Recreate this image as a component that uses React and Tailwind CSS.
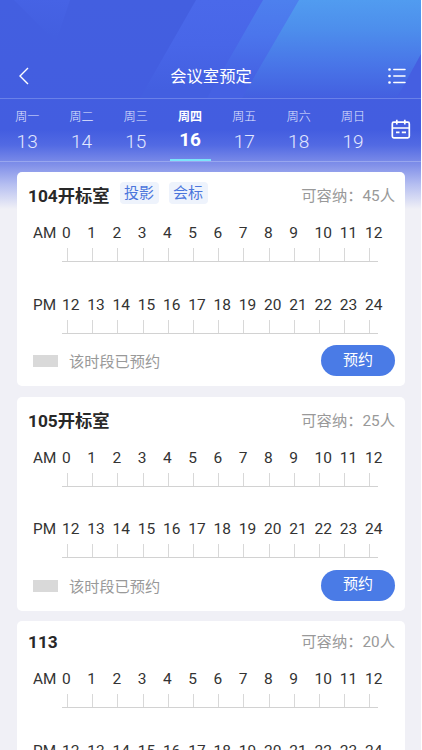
const days = [
  ['周一', 13], ['周二', 14], ['周三', 15], ['周四', 16],
  ['周五', 17], ['周六', 18], ['周日', 19],
];

const rooms = [
  { name: '104开标室', tags: ['投影', '会标'], seats: 45 },
  { name: '105开标室', tags: [], seats: 25 },
  { name: '113', tags: [], seats: 20, compact: true },
];

function Backdrop() {
  return (
    <svg className="absolute left-0 top-0 h-[220px] w-[421px]" viewBox="0 0 421 220" preserveAspectRatio="none" aria-hidden="true">
      <defs>
        <linearGradient id="sky" x1="0" y1="0" x2="0" y2="98" gradientUnits="userSpaceOnUse">
          <stop offset="0" stopColor="#519cf0" />
          <stop offset="0.3" stopColor="#4d8eec" />
          <stop offset="0.65" stopColor="#4976e8" />
          <stop offset="1" stopColor="#435fe0" />
        </linearGradient>
        <linearGradient id="band" x1="0" y1="0" x2="0" y2="80" gradientUnits="userSpaceOnUse">
          <stop offset="0" stopColor="#4d80ee" />
          <stop offset="0.45" stopColor="#4b75ec" />
          <stop offset="1" stopColor="#4561e3" />
        </linearGradient>
        <linearGradient id="soft" x1="0" y1="0" x2="0" y2="90" gradientUnits="userSpaceOnUse">
          <stop offset="0" stopColor="#4a69ea" />
          <stop offset="0.5" stopColor="#4866e8" />
          <stop offset="1" stopColor="#435fe0" />
        </linearGradient>
        <linearGradient id="fade" x1="0" y1="0" x2="0" y2="220" gradientUnits="userSpaceOnUse">
          <stop offset="0" stopColor="#435fe0" />
          <stop offset="0.59" stopColor="#435de0" />
          <stop offset="0.66" stopColor="#526ae3" />
          <stop offset="0.75" stopColor="#8190e9" />
          <stop offset="0.84" stopColor="#b6bff1" />
          <stop offset="0.95" stopColor="#f0f0f6" />
        </linearGradient>
        <linearGradient id="corner" x1="60" y1="0" x2="55" y2="36" gradientUnits="userSpaceOnUse">
          <stop offset="0" stopColor="#4663e5" />
          <stop offset="1" stopColor="#435fe0" />
        </linearGradient>
      </defs>
      <rect width="421" height="220" fill="url(#fade)" />
      <path d="M14 0H70L56 42Z" fill="url(#corner)" />
      <path d="M196 0H421V98H140Z" fill="url(#soft)" />
      <path d="M263 0H421V98H207Z" fill="url(#band)" />
      <path d="M299 0H421V98H242Z" fill="url(#sky)" />
      <path d="M421 54V98H397Z" fill="#455fe1" />
    </svg>
  );
}

function Timeline({ label, start }) {
  return (
    <div className="flex h-[71.5px] text-[15.5px] leading-5 text-[#333]">
      <div className="w-[29px] shrink-0 pt-px text-[15.3px]">{label}</div>
      <div className="w-[316px]">
        <div className="flex pt-px">
          {Array.from({ length: 13 }, (_, i) => (
            <span key={i} className="w-[25.25px] shrink-0 whitespace-nowrap">{start + i}</span>
          ))}
        </div>
        <div className="mt-[5px] flex h-[14px] border-b border-[#d2d2d2] pl-[5px]">
          {Array.from({ length: 13 }, (_, i) => (
            <span key={i} className="w-[25.2px] shrink-0 border-l border-[#d8d8d8]" />
          ))}
        </div>
      </div>
    </div>
  );
}

function RoomCard({ room }) {
  return (
    <section className="shrink-0 overflow-hidden rounded-[5px] bg-white">
      <div className={`flex pl-[11px] pr-[10px] ${room.compact ? 'h-[47px] pt-[9px]' : 'h-[50px] pt-[12px]'}`}>
        <h2 className="text-[17.3px] font-bold leading-6 text-[#282828]">{room.name}</h2>
        <div className="-mt-[2px] ml-[10px] flex gap-[10px]">
          {room.tags.map((tag) => (
            <span key={tag} className="h-[22px] w-[39px] rounded-[4px] bg-[#eef3fc] text-center text-[15px] leading-[23px] text-[#4b76dc]">{tag}</span>
          ))}
        </div>
        <span className="ml-auto text-[15.3px] leading-6 text-[#999]">可容纳：{room.seats}人</span>
      </div>
      <div className="pl-4">
        <Timeline label="AM" start={0} />
        <Timeline label="PM" start={12} />
      </div>
      <div className="flex h-[21px] items-start pl-4 pr-[10px]">
        <span className="mt-[-10px] h-[12px] w-[25px] bg-[#d9d9d9]" />
        <span className="ml-[11px] mt-[-15px] text-[15.2px] leading-6 text-[#999]">该时段已预约</span>
        <button className="ml-auto mt-[-20px] h-[31px] w-[74px] rounded-full bg-[#4a7be6] pb-px text-[15px] leading-[29px] text-white">预约</button>
      </div>
    </section>
  );
}

export default function App() {
  return (
    <div className="relative h-[750px] w-[421px] overflow-hidden bg-[#f0f0f6] font-['Roboto','Noto_Sans_CJK_SC',sans-serif]">
      <Backdrop />
      <div className="relative">
        <header className="flex h-[99px] items-end justify-between border-b border-[#6a81e8] pb-[10px] pl-[18px] pr-[15px] text-white">
          <svg className="mb-px" width="20" height="22" viewBox="0 0 20 22" fill="none" stroke="currentColor" strokeWidth="1.4"><path d="M10 3L2 11L10 19" /></svg>
          <h1 className="-ml-[4px] text-[16.3px] leading-[22px]">会议室预定</h1>
          <svg className="mb-px" width="18" height="22" viewBox="0 0 18 22" fill="none" stroke="currentColor" strokeWidth="1.5" strokeLinecap="round">
            <path d="M5.8 4.5H17M5.8 11H17M5.8 17.5H17" />
            <path d="M1.5 4.5h.01M1.5 11h.01M1.5 17.5h.01" strokeWidth="2.7" />
          </svg>
        </header>
        <nav className="flex h-[63px] border-b border-[#98a6ee] text-white">
          {days.map(([name, date]) => (
            <div key={name} className={`relative flex w-[54.3px] shrink-0 flex-col items-center pt-[9px] ${date === 16 ? 'font-bold' : 'font-light text-[#e3e8ff]'}`}>
              <span className="text-[12px] leading-[18px]">{name}</span>
              <span className={`leading-6 ${date === 16 ? 'mt-[2px] text-[19px]' : 'mt-[4px] text-[19px]'}`}>{date}</span>
              {date === 16 && <i className="absolute bottom-0 h-[2px] w-[41px] bg-[#7ce4fa]" />}
            </div>
          ))}
          <svg className="ml-[11px] mt-[20px] shrink-0" width="20" height="22" viewBox="0 0 20 22" fill="none" stroke="currentColor" strokeWidth="1.7">
            <rect x="1.3" y="3.2" width="17" height="15.6" rx="1.5" />
            <path d="M1.3 9H18.3M5.8 .8V5.6M13.8 .8V5.6M5 13.3H8.5M10.8 13.3H15" />
          </svg>
        </nav>
        <main className="flex flex-col gap-[10.5px] pl-[17px] pr-4 pt-[10px]">
          {rooms.map((room) => <RoomCard key={room.name} room={room} />)}
        </main>
      </div>
    </div>
  );
}
